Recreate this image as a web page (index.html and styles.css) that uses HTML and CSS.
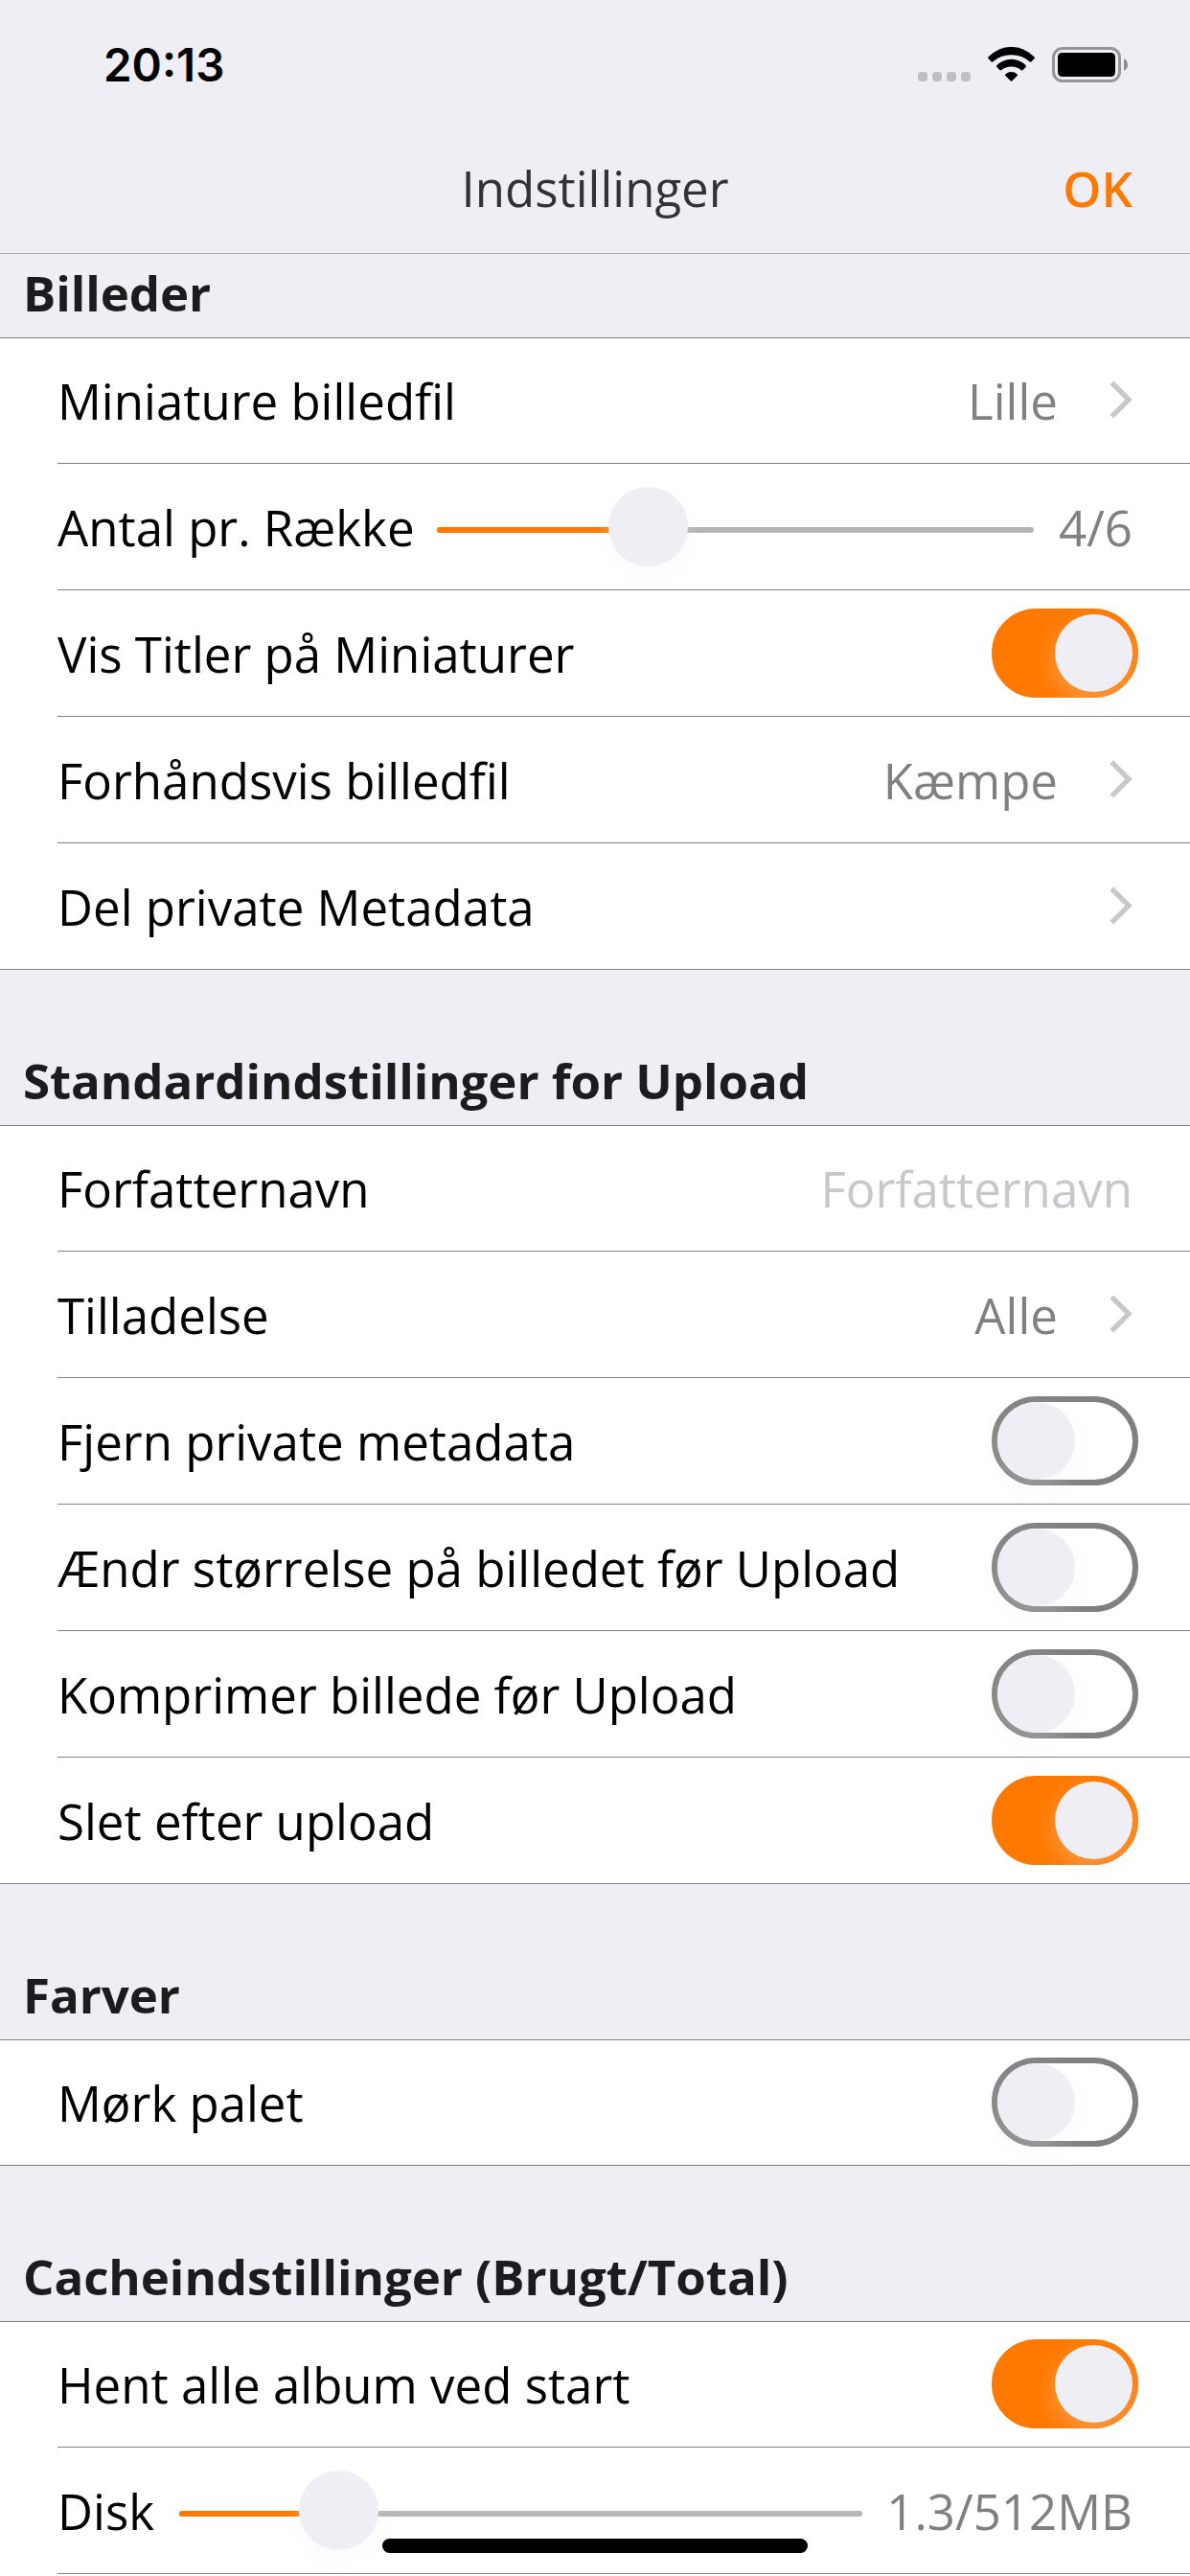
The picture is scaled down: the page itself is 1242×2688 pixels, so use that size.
FILE: index.html
```html
<!DOCTYPE html>
<html lang="da">
<head>
<meta charset="utf-8">
<title>Indstillinger</title>
<link rel="stylesheet" href="styles.css">
</head>
<body>
<svg class="defs" width="0" height="0" aria-hidden="true">
  <symbol id="chevron" viewBox="0 0 24 40"><path d="M2.3 2.3 L20 20 L2.3 37.7" fill="none" stroke="#c7c7cc" stroke-width="5.3"/></symbol>
</svg>
<div class="screen">
  <header class="top">
    <div class="status">
      <span class="time">20:13</span>
      <div class="indicators">
        <div class="dots"><i></i><i></i><i></i><i></i></div>
        <svg class="wifi" width="49" height="36" viewBox="0 0 49 36">
          <path d="M.7 10.3A32.5 32.5 0 0 1 48.3 10.3Q49.4 11.3 48.4 12.3L45.2 15.6Q44.6 16.2 43.9 15.6A29 29 0 0 0 5.1 15.6Q4.4 16.2 3.8 15.6L.6 12.3Q-.4 11.3 .7 10.3Z"/>
          <path d="M9.4 19.2A21 21 0 0 1 39.6 19.2Q40.5 20 39.7 20.9L36.3 24.3Q35.6 24.9 34.9 24.3A16.5 16.5 0 0 0 14.1 24.3Q13.4 24.9 12.7 24.3L9.3 20.9Q8.5 20 9.4 19.2Z"/>
          <path d="M18.4 28.4A9 9 0 0 1 30.6 28.4Q31.6 29.2 30.7 30.1L25.2 35.5Q24.5 36.1 23.8 35.5L18.3 30.1Q17.4 29.2 18.4 28.4Z"/>
        </svg>
        <svg class="battery" width="79" height="37" viewBox="0 0 79 37">
          <rect x="1.5" y="1.5" width="69" height="34" rx="9.5" fill="none" stroke="#959597" stroke-width="3"/>
          <rect x="6" y="6" width="60" height="25" rx="4.5"/>
          <path d="M75 12C80.3 14.6 80.3 22.4 75 25Z" fill="#8c8c8e"/>
        </svg>
      </div>
    </div>
    <nav class="nav"><span></span><h1>Indstillinger</h1><a class="ok">OK</a></nav>
  </header>

  <section class="first">
    <h2>Billeder</h2>
    <ul>
      <li><span class="label">Miniature billedfil</span><span class="value">Lille</span><svg class="chev"><use href="#chevron"/></svg></li>
      <li><span class="label">Antal pr. Række</span><div class="slider s-row"><i class="fill"></i><i class="thumb"></i></div><span class="value">4/6</span></li>
      <li><span class="label">Vis Titler på Miniaturer</span><span class="switch on"></span></li>
      <li><span class="label">Forhåndsvis billedfil</span><span class="value">Kæmpe</span><svg class="chev"><use href="#chevron"/></svg></li>
      <li><span class="label">Del private Metadata</span><svg class="chev"><use href="#chevron"/></svg></li>
    </ul>
  </section>

  <section>
    <h2>Standardindstillinger for Upload</h2>
    <ul>
      <li><span class="label">Forfatternavn</span><span class="value placeholder">Forfatternavn</span></li>
      <li><span class="label">Tilladelse</span><span class="value">Alle</span><svg class="chev"><use href="#chevron"/></svg></li>
      <li><span class="label">Fjern private metadata</span><span class="switch"></span></li>
      <li><span class="label">Ændr størrelse på billedet før Upload</span><span class="switch"></span></li>
      <li><span class="label">Komprimer billede før Upload</span><span class="switch"></span></li>
      <li><span class="label">Slet efter upload</span><span class="switch on"></span></li>
    </ul>
  </section>

  <section>
    <h2>Farver</h2>
    <ul>
      <li><span class="label">Mørk palet</span><span class="switch"></span></li>
    </ul>
  </section>

  <section class="last">
    <h2>Cacheindstillinger (Brugt/Total)</h2>
    <ul>
      <li><span class="label">Hent alle album ved start</span><span class="switch on"></span></li>
      <li><span class="label">Disk</span><div class="slider s-disk"><i class="fill"></i><i class="thumb"></i></div><span class="value">1.3/512MB</span></li>
      <li></li>
    </ul>
  </section>
  <div class="home"></div>
</div>
</body>
</html>
```
FILE: styles.css
```css
* { box-sizing: border-box; }

body {
  margin: 0;
  background: #efeef4;
  font-family: "Open Sans", "Noto Sans", sans-serif;
  font-size: 51px;
  line-height: 70px;
  color: #000;
}

.defs { position: absolute; }

.screen {
  position: relative;
  width: 1242px;
  height: 2688px;
  overflow: hidden;
}

/* Status bar and navigation bar */
.top {
  display: flex;
  flex-direction: column;
  height: 265px;
  border-bottom: 1px solid #a7a7ab;
}

.status {
  display: flex;
  justify-content: space-between;
  height: 132px;
  padding: 0 65px 0 108px;
}

.time {
  padding-top: 33px;
  font-family: Inter, sans-serif;
  font-size: 47.5px;
  font-weight: 600;
}

.indicators {
  display: flex;
  align-items: flex-start;
  gap: 18px;
  padding-top: 49px;
}

.dots { display: flex; gap: 5px; padding-top: 26px; }
.dots i { width: 10px; height: 10px; border-radius: 4px; background: #bfbfc2; }

.nav {
  display: grid;
  grid-template-columns: 1fr auto 1fr;
  align-items: center;
  height: 128px;
  padding: 0 60px;
}

h1 { margin: 0; font-size: 51px; font-weight: 400; color: #333336; }
.ok { justify-self: end; font-weight: 600; color: #ff7900; }

/* Grouped lists */
h2 {
  display: flex;
  align-items: flex-end;
  height: 162px;
  margin: 0;
  padding: 0 24px 12px;
  font-size: 51px;
  font-weight: 700;
  letter-spacing: -.06px;
  color: #1c1c1e;
}

.first h2 { height: 87px; }

ul {
  margin: 0;
  padding: 0 0 0 60px;
  list-style: none;
  background: #fff;
  border-top: 1px solid #808080;
  border-bottom: 1px solid #808080;
}

li {
  display: flex;
  align-items: center;
  height: 132px;
  padding-right: 60px;
  border-bottom: 1px solid #808080;
}

li:first-child { height: 131px; }
li:last-child { height: 131px; border-bottom: 0; }
li:only-child { height: 130px; }

.label { white-space: nowrap; }
.value { margin-left: auto; white-space: nowrap; color: #808080; }
.placeholder { color: #c7c7cc; }

.chev {
  flex: none;
  width: 24px;
  height: 40px;
  margin: -2px 0 0 auto;
}
.value + .chev { margin-left: 54px; }

.switch {
  flex: none;
  width: 153px;
  height: 93px;
  margin: 0 -6px 0 auto;
  border: 6px solid #808080;
  border-radius: 47px;
  background: #fff;
}

li:first-child .switch { margin-top: -1px; }

.switch::before {
  content: "";
  display: block;
  width: 81px;
  height: 81px;
  border-radius: 50%;
  background: #efeef4;
  box-shadow: 0 9px 24px rgba(239, 238, 244, .3);
}

.switch.on { border-color: #ff7900; background: #ff7900; }
.switch.on::before { margin-left: 60px; }

.slider {
  display: flex;
  align-items: center;
  flex: none;
  height: 6px;
  margin-top: 7px;
  border-radius: 3px;
  background: #b5b5b5;
}

.fill { height: 6px; border-radius: 3px 0 0 3px; background: #ff7900; }

.thumb {
  flex: none;
  width: 83px;
  height: 83px;
  margin-top: -7px;
  border-radius: 50%;
  background: #efeef4;
  box-shadow: 0 9px 18px rgba(239, 238, 244, .3);
}

.s-row { width: 623px; margin-left: 23px; }
.s-row .fill { width: 179px; }
.s-disk { width: 713px; margin-left: 26px; }
.s-disk .fill { width: 125px; }

/* Home indicator floats above the list */
.home {
  position: absolute;
  left: 399px;
  bottom: 24px;
  width: 444px;
  height: 15px;
  border-radius: 8px;
  background: #000;
}
```
